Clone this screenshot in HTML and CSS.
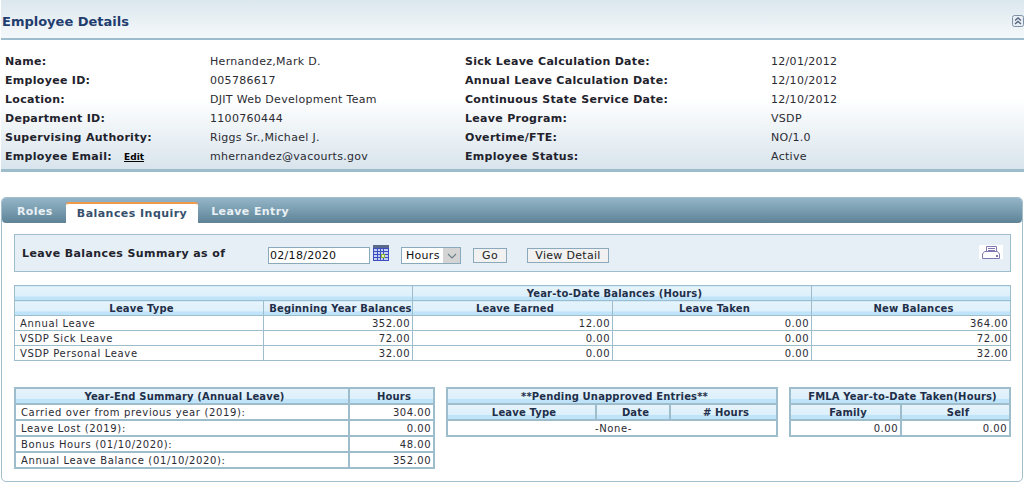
FILE: index.html
```html
<!DOCTYPE html>
<html lang="en">
<head>
  <meta charset="UTF-8">
  <meta name="viewport" content="width=device-width, initial-scale=1.0">
  <title>Employee Details</title>
  <link rel="stylesheet" href="styles.css">
</head>
<body>
  <div class="details-header">
    <h2>Employee Details</h2>
    <svg class="collapse-icon" width="12" height="12" viewBox="0 0 12 12">
      <rect x="0.5" y="0.5" width="11" height="11" rx="2" fill="#e8eff4" stroke="#7f8fa6"/>
      <path d="M3 5.5 L6 3 L9 5.5 M3 9 L6 6.5 L9 9" fill="none" stroke="#56657f" stroke-width="1.4"/>
    </svg>
  </div>
  <div class="details-body">
    <div class="details-col">
      <div class="detail-row"><span class="detail-label">Name:</span><span>Hernandez,Mark D.</span></div>
      <div class="detail-row"><span class="detail-label">Employee ID:</span><span>005786617</span></div>
      <div class="detail-row"><span class="detail-label">Location:</span><span>DJIT Web Development Team</span></div>
      <div class="detail-row"><span class="detail-label">Department ID:</span><span>1100760444</span></div>
      <div class="detail-row"><span class="detail-label">Supervising Authority:</span><span>Riggs Sr.,Michael J.</span></div>
      <div class="detail-row"><span class="detail-label">Employee Email: <a class="edit-link" href="#">Edit</a></span><span>mhernandez@vacourts.gov</span></div>
    </div>
    <div class="details-col details-col-right">
      <div class="detail-row"><span class="detail-label">Sick Leave Calculation Date:</span><span>12/01/2012</span></div>
      <div class="detail-row"><span class="detail-label">Annual Leave Calculation Date:</span><span>12/10/2012</span></div>
      <div class="detail-row"><span class="detail-label">Continuous State Service Date:</span><span>12/10/2012</span></div>
      <div class="detail-row"><span class="detail-label">Leave Program:</span><span>VSDP</span></div>
      <div class="detail-row"><span class="detail-label">Overtime/FTE:</span><span>NO/1.0</span></div>
      <div class="detail-row"><span class="detail-label">Employee Status:</span><span>Active</span></div>
    </div>
  </div>

  <div class="tab-panel">
    <div class="tab-bar">
      <a class="tab" href="#">Roles</a>
      <a class="tab tab-active" href="#">Balances Inquiry</a>
      <a class="tab" href="#">Leave Entry</a>
    </div>
    <div class="tab-content">
      <div class="summary-box">
        <span class="summary-title">Leave Balances Summary as of</span>
        <input class="date-input" type="text" value="02/18/2020">
        <svg class="calendar-icon" width="16" height="16" viewBox="0 0 16 16">
          <rect x="0" y="2" width="16" height="14" fill="#3d4fc0"/>
          <rect x="0" y="0" width="16" height="3" fill="#5a6a8c"/>
          <path d="M1 4h3v2H1zM5 4h2v2H5zM8 4h2v2H8zM11 4h4v2h-4zM1 7h3v2H1zM5 7h2v2H5zM8 7h2v2H8zM11 7h4v2h-4zM1 10h3v2H1zM5 10h2v2H5zM11 10h4v2h-4zM1 13h3v2H1zM5 13h2v2H5zM8 13h2v2H8zM11 13h4v2h-4z" fill="#c5d0f2"/>
          <rect x="8.5" y="9.5" width="3" height="3" fill="#e4f2c0" stroke="#8fb838"/>
        </svg>
        <div class="fake-select">
          <span class="fake-select-value">Hours</span>
          <span class="fake-select-arrow">
            <svg width="10" height="6" viewBox="0 0 10 6"><path d="M1 1 L5 5 L9 1" fill="none" stroke="#6f7f8a" stroke-width="1.2"/></svg>
          </span>
        </div>
        <button class="btn btn-go">Go</button>
        <button class="btn btn-detail">View Detail</button>
        <span class="print-box">
          <svg width="18" height="13" viewBox="0 0 18 13">
            <path d="M4.5 5.5 V0.5 H14.5 V5.5" fill="#fff" stroke="#8078b0"/>
            <path d="M6 2.5 H13 M6 4.5 H13" stroke="#8078b0"/>
            <path d="M2.5 5.5 H15.5 L17.5 8 V12.5 H0.5 V8 Z" fill="#fff" stroke="#8078b0"/>
            <rect x="14" y="9" width="2" height="2" fill="#8078b0"/>
          </svg>
        </span>
      </div>

      <table class="grid balances">
        <colgroup><col class="c-type"><col class="c-begin"><col class="c-earned"><col class="c-taken"><col></colgroup>
        <tr>
          <th colspan="2"></th>
          <th colspan="2">Year-to-Date Balances (Hours)</th>
          <th></th>
        </tr>
        <tr>
          <th>Leave Type</th>
          <th>Beginning Year Balances</th>
          <th>Leave Earned</th>
          <th>Leave Taken</th>
          <th>New Balances</th>
        </tr>
        <tr><td>Annual Leave</td><td class="num">352.00</td><td class="num">12.00</td><td class="num">0.00</td><td class="num">364.00</td></tr>
        <tr><td>VSDP Sick Leave</td><td class="num">72.00</td><td class="num">0.00</td><td class="num">0.00</td><td class="num">72.00</td></tr>
        <tr><td>VSDP Personal Leave</td><td class="num">32.00</td><td class="num">0.00</td><td class="num">0.00</td><td class="num">32.00</td></tr>
      </table>

      <div class="lower-tables">
        <table class="grid thick year-end">
          <colgroup><col><col class="c-hours"></colgroup>
          <tr><th>Year-End Summary (Annual Leave)</th><th>Hours</th></tr>
          <tr><td>Carried over from previous year (2019):</td><td class="num">304.00</td></tr>
          <tr><td>Leave Lost (2019):</td><td class="num">0.00</td></tr>
          <tr><td>Bonus Hours (01/10/2020):</td><td class="num">48.00</td></tr>
          <tr><td>Annual Leave Balance (01/10/2020):</td><td class="num">352.00</td></tr>
        </table>
        <table class="grid thick pending">
          <colgroup><col class="c-ptype"><col class="c-pdate"><col></colgroup>
          <tr><th colspan="3">**Pending Unapproved Entries**</th></tr>
          <tr><th>Leave Type</th><th>Date</th><th># Hours</th></tr>
          <tr><td colspan="3" class="center">-None-</td></tr>
        </table>
        <table class="grid thick fmla">
          <colgroup><col class="c-half"><col></colgroup>
          <tr><th colspan="2">FMLA Year-to-Date Taken(Hours)</th></tr>
          <tr><th>Family</th><th>Self</th></tr>
          <tr><td class="num">0.00</td><td class="num">0.00</td></tr>
        </table>
      </div>
    </div>
  </div>
</body>
</html>
```

FILE: styles.css
```css
body, html {
  margin: 0;
  padding: 0;
  background: #fff;
  font-family: "DejaVu Sans", Verdana, sans-serif;
  font-size: 11px;
  letter-spacing: 0.3px;
  color: #2b2b33;
}

/* employee details block */
.details-header {
  display: flex;
  justify-content: space-between;
  align-items: center;
  box-sizing: border-box;
  height: 40px;
  margin-left: 1px;
  width: 1023px;
  padding: 4px 0 0 1px;
  background: linear-gradient(#dbe7ee, #f4f8fa);
  border-bottom: 2px solid #9dbccc;
}
.details-header h2 {
  margin: 0;
  font-size: 13px;
  font-weight: bold;
  letter-spacing: 0;
  color: #1f3d6e;
}
.details-body {
  display: flex;
  box-sizing: border-box;
  height: 132px;
  width: 1023px;
  margin-left: 1px;
  padding: 12px 0 0 4px;
  background: linear-gradient(#fff 0%, #fff 45%, #d8e4ec 100%);
  border-bottom: 3px solid #9dbccc;
}
.details-col {
  width: 460px;
}
.detail-row {
  display: flex;
  height: 19px;
  line-height: 19px;
}
.detail-label {
  width: 205px;
  font-weight: bold;
  color: #22222c;
}
.details-col-right .detail-label {
  width: 306px;
}
.edit-link {
  margin-left: 8px;
  font-size: 9px;
  letter-spacing: 0;
  color: #000;
}

/* tabs */
.tab-panel {
  box-sizing: border-box;
  width: 1022px;
  height: 285px;
  margin: 25px 0 0 1px;
  border: 1px solid #a3bfce;
  border-radius: 5px;
}
.tab-bar {
  display: flex;
  align-items: flex-end;
  height: 25px;
  padding-left: 2px;
  border-radius: 4px;
  background: linear-gradient(#94b5c7, #5e8397);
}
.tab {
  height: 25px;
  line-height: 27px;
  padding: 0 13px;
  font-size: 11px;
  font-weight: bold;
  color: #e9f1f5;
  text-decoration: none;
  letter-spacing: 0.4px;
}
.tab-active {
  box-sizing: border-box;
  height: 21px;
  line-height: 19px;
  padding: 0 11px;
  letter-spacing: 0.45px;
  background: #fff;
  color: #36506e;
  border-top: 2px solid #ee9a4d;
  border-radius: 3px 3px 0 0;
}
.tab-content {
  padding: 11px 11px 0 12px;
}

/* summary toolbar */
.summary-box {
  display: flex;
  align-items: center;
  position: relative;
  box-sizing: border-box;
  height: 38px;
  padding-left: 7px;
  background: #e6eff5;
  border: 1px solid #9dbccc;
}
.summary-title {
  width: 246px;
  font-weight: bold;
  letter-spacing: 0.4px;
  color: #22222c;
}
.date-input {
  box-sizing: border-box;
  width: 102px;
  height: 17px;
  margin-top: 5px;
  padding: 0 1px;
  border: 1px solid #8aa9bd;
  font-family: inherit;
  font-size: 11px;
  letter-spacing: 0.3px;
  color: #111;
}
.calendar-icon {
  margin: -1px 12px 0 3px;
}
.fake-select {
  display: flex;
  box-sizing: border-box;
  width: 60px;
  height: 17px;
  margin-top: 5px;
  background: #fff;
  border: 1px solid #8aa9bd;
  color: #111;
}
.fake-select-value {
  flex: 1;
  padding-left: 4px;
  line-height: 15px;
}
.fake-select-arrow {
  display: flex;
  align-items: center;
  justify-content: center;
  width: 17px;
  background: #d4d4d4;
}
.btn {
  box-sizing: border-box;
  height: 15px;
  margin-top: 5px;
  padding: 0;
  background: #f1f1f1;
  border: 1px solid #8aa9bd;
  font-family: inherit;
  font-size: 11px;
  letter-spacing: 0.3px;
  line-height: 13px;
  color: #222;
}
.btn-go {
  width: 34px;
  margin-left: 12px;
}
.btn-detail {
  width: 82px;
  margin-left: 20px;
}
.print-box {
  position: absolute;
  right: 7px;
  top: 10px;
  display: flex;
  justify-content: center;
  align-items: center;
  width: 24px;
  height: 14px;
  background: #fff;
}

/* data tables */
.grid {
  border-collapse: collapse;
  table-layout: fixed;
  font-size: 10px;
}
.grid th, .grid td {
  box-sizing: border-box;
  border: 1px solid #9dbccc;
  white-space: nowrap;
  overflow: hidden;
  height: 15px;
  line-height: 13px;
}
.grid th {
  padding: 0 0 0 5px;
  background: linear-gradient(#e6f3fb 0%, #dcf0fb 70%, #bfe3f8 71%, #bfe3f8 100%);
  text-align: center;
  letter-spacing: 0.15px;
  color: #1f2f4a;
  font-weight: bold;
}
.grid td {
  padding: 0 2px 0 5px;
  letter-spacing: 0.64px;
  color: #2b2b33;
}
.grid td.num {
  text-align: right;
  letter-spacing: 0.5px;
}
.grid td.center {
  text-align: center;
}
.balances {
  width: 997px;
  margin-top: 13px;
}
.c-type { width: 249px; }
.c-begin { width: 149px; }
.c-earned { width: 200px; }
.c-taken { width: 199px; }

.lower-tables {
  display: flex;
  align-items: flex-start;
  gap: 11px;
  margin-top: 26px;
}
.thick th, .thick td {
  border-width: 2px;
  height: 16px;
  padding-top: 1px;
  line-height: 12px;
}
.year-end { width: 421px; }
.c-hours { width: 85px; }
.pending { width: 332px; }
.c-ptype { width: 149px; }
.c-pdate { width: 74px; }
.fmla { width: 222px; }
.c-half { width: 111px; }
```
